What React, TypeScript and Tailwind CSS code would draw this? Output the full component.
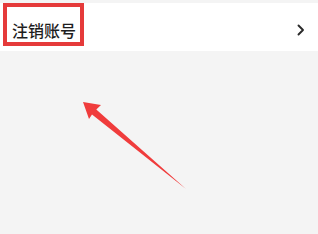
export default function App() {
  return (
    <div className="relative h-[234px] w-[318px] overflow-hidden bg-[#f4f4f4] font-['Noto_Sans_CJK_SC',sans-serif]">
      <div className="mt-[3px] flex h-[48px] items-center justify-between bg-white pl-[12px] pr-[13px] pt-[5px]">
        <span className="text-[16px] font-medium leading-none text-[#1e1e1e]">注销账号</span>
        <svg width="8" height="12" viewBox="0 0 8 12" className="text-[#2a2a2a]">
          <path d="M1.5 1.5 L6 6 L1.5 10.5" fill="none" stroke="currentColor" strokeWidth="1.9" strokeLinecap="round" strokeLinejoin="round" />
        </svg>
      </div>

      {/* annotation box */}
      <div className="absolute left-[3px] top-[3px] h-[43px] w-[81px] border-[4px] border-[#e53a3a]" />

      {/* annotation arrow */}
      <svg className="absolute left-0 top-0" width="318" height="234" viewBox="0 0 318 234">
        <polygon
          points="83,102 101,105 96.3,109.5 186,189 92,114.5 89,119"
          fill="#f03c3c"
        />
      </svg>
    </div>
  );
}
